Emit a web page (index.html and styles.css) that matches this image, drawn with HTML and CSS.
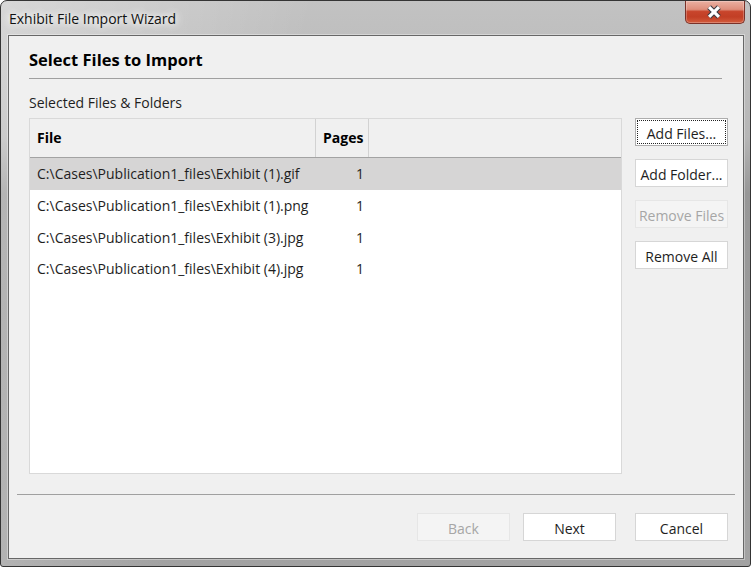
FILE: index.html
```html
<!DOCTYPE html>
<html lang="en">
<head>
    <meta charset="UTF-8">
    <title>Exhibit File Import Wizard</title>
    <link rel="stylesheet" href="styles.css">
</head>
<body>
    <div class="window">
        <div class="titlebar">
            <span class="title">Exhibit File Import Wizard</span>
            <button class="close-btn" type="button">
                <svg width="60" height="23" viewBox="0 0 60 23">
                    <path d="M24.5 6 L34.5 16 M34.5 6 L24.5 16" stroke="#3c3c44" stroke-width="5.4" fill="none"/>
                    <path d="M24.5 6 L34.5 16 M34.5 6 L24.5 16" stroke="#ffffff" stroke-width="3.2" fill="none"/>
                </svg>
            </button>
        </div>

        <div class="client">
            <div class="page">
                <h1 class="page-title">Select Files to Import</h1>
                <div class="section-label">Selected Files &amp; Folders</div>

                <div class="picker">
                    <div class="file-list">
                        <div class="list-header">
                            <div class="col-file">File</div>
                            <div class="col-pages">Pages</div>
                        </div>
                        <div class="list-row selected">
                            <div class="col-file">C:\Cases\Publication1_files\Exhibit (1).gif</div>
                            <div class="col-pages">1</div>
                        </div>
                        <div class="list-row">
                            <div class="col-file">C:\Cases\Publication1_files\Exhibit (1).png</div>
                            <div class="col-pages">1</div>
                        </div>
                        <div class="list-row">
                            <div class="col-file">C:\Cases\Publication1_files\Exhibit (3).jpg</div>
                            <div class="col-pages">1</div>
                        </div>
                        <div class="list-row">
                            <div class="col-file">C:\Cases\Publication1_files\Exhibit (4).jpg</div>
                            <div class="col-pages">1</div>
                        </div>
                    </div>

                    <div class="side-buttons">
                        <button class="btn focused" type="button">Add Files...</button>
                        <button class="btn" type="button">Add Folder...</button>
                        <button class="btn" type="button" disabled>Remove Files</button>
                        <button class="btn" type="button">Remove All</button>
                    </div>
                </div>
            </div>

            <div class="footer">
                <div class="footer-line"></div>
                <div class="footer-buttons">
                    <button class="btn" type="button" disabled>Back</button>
                    <button class="btn btn-next" type="button">Next</button>
                    <button class="btn btn-cancel" type="button">Cancel</button>
                </div>
            </div>
        </div>
    </div>
</body>
</html>
```

FILE: styles.css
```css
* {
    margin: 0;
    padding: 0;
    box-sizing: border-box;
}

body {
    width: 752px;
    height: 568px;
    overflow: hidden;
    background: #ffffff;
    font-family: "Open Sans", "Noto Sans", sans-serif;
    font-size: 14px;
    color: #1e1e1e;
}

.window {
    width: 751px;
    height: 567px;
    border: 1px solid #343434;
    border-radius: 7px 7px 3px 3px;
    padding: 0 6px 7px 7px;
    display: flex;
    flex-direction: column;
    background:
        linear-gradient(105deg, rgba(255, 255, 255, 0.35), rgba(255, 255, 255, 0) 35%),
        linear-gradient(to bottom, #c2c2c2 0, #b6b6b6 24%, #979797 34%, #a2a2a2 100%);
}

.titlebar {
    height: 34px;
    display: flex;
    justify-content: space-between;
    align-items: flex-start;
}

.title {
    padding-left: 1px;
    line-height: 35px;
    font-size: 14px;
    color: #111;
    text-shadow: 0 0 6px #fff, 0 0 10px rgba(255, 255, 255, 0.9), 0 0 14px rgba(255, 255, 255, 0.7);
}

.close-btn {
    width: 60px;
    height: 23px;
    margin-right: -1px;
    border: 1px solid #7a3128;
    border-top: none;
    border-radius: 0 0 5px 5px;
    background: linear-gradient(to bottom, #eab0a2 0%, #de8e7b 38%, #c8452c 48%, #c23f25 72%, #d35c3d 100%);
    box-shadow: inset 0 0 0 1px rgba(255, 255, 255, 0.25);
    display: flex;
    align-items: center;
    justify-content: center;
}

.close-btn svg {
    display: block;
    margin-left: -1px;
}

.client {
    flex: 1;
    border: 1px solid #676767;
    box-shadow: 0 0 0 1px rgba(255, 255, 255, 0.35);
    background: #f0f0f0;
    display: flex;
    flex-direction: column;
}

.page {
    padding: 0 15px 0 20px;
}

.page-title {
    margin-top: 12px;
    margin-right: 6px;
    padding-bottom: 6px;
    border-bottom: 1px solid #a0a0a0;
    font-size: 16.5px;
    line-height: 24px;
    font-weight: bold;
    color: #000;
}

.section-label {
    margin-top: 14px;
    line-height: 20px;
}

.picker {
    margin-top: 5px;
    height: 356px;
    display: flex;
    gap: 13px;
}

.file-list {
    width: 594px;
    border: 1px solid #d9d9d9;
    background: #ffffff;
}

.list-header {
    height: 39px;
    display: flex;
    background: #f0f0f0;
    border-bottom: 1px solid #a3a3a3;
}

.list-header .col-file,
.list-header .col-pages {
    border-right: 1px solid #d2d2d2;
    padding-left: 7px;
    line-height: 38px;
    font-weight: bold;
    color: #000;
}

.col-file {
    width: 286px;
    white-space: nowrap;
}

.col-pages {
    width: 53px;
}

.list-row {
    height: 31.67px;
    display: flex;
    align-items: center;
}

.list-row .col-file {
    padding-left: 7px;
}

.list-row .col-pages {
    text-align: right;
    padding-right: 5px;
}

.list-row.selected {
    background: #d6d5d5;
}

.side-buttons {
    width: 93px;
    display: flex;
    flex-direction: column;
    gap: 13px;
}

.btn {
    position: relative;
    width: 93px;
    height: 28px;
    padding-top: 2px;
    border: 1px solid #d6d6d6;
    background: #ffffff;
    font-family: inherit;
    font-size: 14px;
    color: #1e1e1e;
    white-space: nowrap;
}

.btn.focused {
    border-color: #adadad;
}

.btn.focused::after {
    content: "";
    position: absolute;
    inset: 1px;
    border: 1px dotted #222;
}

.btn:disabled {
    background: #f4f4f4;
    border-color: #e6e6e6;
    color: #a6a6a6;
}

.footer {
    padding: 0 8px;
}

.footer-line {
    margin-top: 20px;
    height: 1px;
    background: #a0a0a0;
}

.footer-buttons {
    margin-top: 18px;
    padding-right: 7px;
    display: flex;
    justify-content: flex-end;
}

.btn-next {
    margin-left: 13px;
}

.btn-cancel {
    margin-left: 19px;
}
```
